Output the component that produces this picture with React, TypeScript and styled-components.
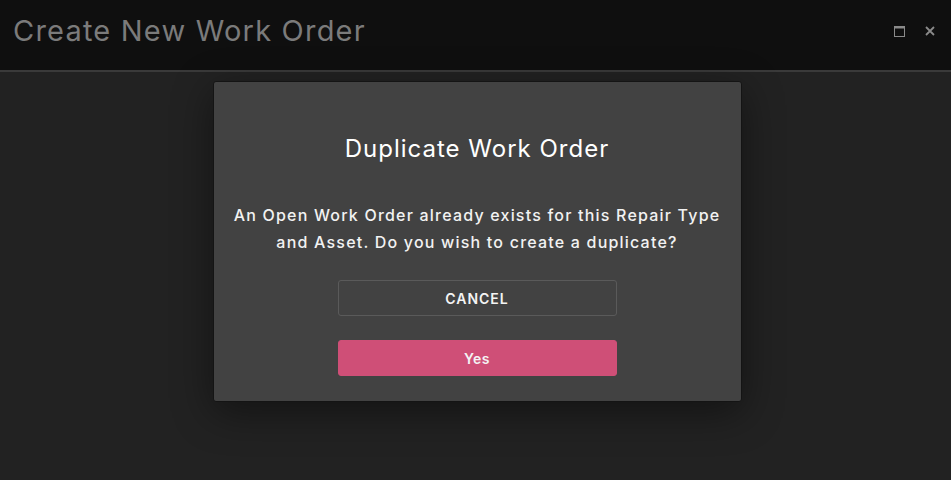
import React from "react";
import styled, { createGlobalStyle } from "styled-components";

const GlobalStyle = createGlobalStyle`
  html, body {
    margin: 0;
    padding: 0;
    background: #222222;
    font-family: "Inter", "Noto Sans", sans-serif;
  }
  #root {
    height: 480px;
  }
`;

const Page = styled.div`
  display: flex;
  flex-direction: column;
  height: 480px;
  background: #222222;
`;

const Header = styled.header`
  display: flex;
  align-items: center;
  justify-content: space-between;
  height: 72px;
  padding: 0 16px 0 13px;
  background: #0f0f0f;
  border-bottom: 2px solid #3a3a3a;
  box-sizing: border-box;
  flex-shrink: 0;
`;

const Title = styled.h1`
  margin: 0 0 10px;
  font-size: 29px;
  font-weight: 400;
  letter-spacing: 1.2px;
  color: #7b7b7b;
`;

const WindowControls = styled.div`
  display: flex;
  align-items: center;
  gap: 20px;
  margin-bottom: 8px;
`;

const ControlButton = styled.button`
  display: flex;
  padding: 0;
  border: none;
  background: transparent;
  color: #8a8a8a;
  cursor: pointer;
`;

const Body = styled.main`
  flex: 1;
  display: flex;
  justify-content: center;
  align-items: flex-start;
  padding: 9px 0 0 3px;
`;

const Dialog = styled.div`
  width: 529px;
  box-sizing: border-box;
  padding: 52px 0 25px;
  display: flex;
  flex-direction: column;
  align-items: center;
  background: #424242;
  border: 1px solid #141414;
  border-radius: 3px;
  box-shadow: 0 10px 40px rgba(0, 0, 0, 0.45);
`;

const DialogTitle = styled.h2`
  margin: 0 0 38px;
  font-size: 24px;
  font-weight: 400;
  line-height: 30px;
  letter-spacing: 1px;
  color: #ffffff;
`;

const Message = styled.p`
  margin: 0 0 24px;
  font-size: 16px;
  font-weight: 500;
  line-height: 27px;
  letter-spacing: 1.2px;
  text-align: center;
  color: #f2f2f2;
`;

const Actions = styled.div`
  display: flex;
  flex-direction: column;
  gap: 24px;
  width: 279px;
`;

const ActionButton = styled.button<{ $primary?: boolean }>`
  height: 36px;
  border-radius: 3px;
  border: 1px solid ${(p) => (p.$primary ? "#cf4f77" : "#5a5a5a")};
  background: ${(p) => (p.$primary ? "#cf4f77" : "transparent")};
  color: #f4f4f4;
  font-family: inherit;
  font-size: 14px;
  font-weight: 600;
  letter-spacing: ${(p) => (p.$primary ? "0.5px" : "1px")};
  cursor: pointer;
`;

function MaximizeIcon() {
  return (
    <svg width="11" height="11" viewBox="0 0 11 11" fill="none">
      <rect x="0.5" y="0.5" width="10" height="10" stroke="#8a8a8a" strokeWidth="1" />
      <rect x="0.5" y="0.5" width="10" height="2" fill="#8a8a8a" />
    </svg>
  );
}

function CloseIcon() {
  return (
    <svg width="10" height="10" viewBox="0 0 10 10" fill="none">
      <path d="M1 1L9 9M9 1L1 9" stroke="#8a8a8a" strokeWidth="1.8" />
    </svg>
  );
}

export default function App() {
  return (
    <>
      <GlobalStyle />
      <Page>
        <Header>
          <Title>Create New Work Order</Title>
          <WindowControls>
            <ControlButton aria-label="Maximize">
              <MaximizeIcon />
            </ControlButton>
            <ControlButton aria-label="Close">
              <CloseIcon />
            </ControlButton>
          </WindowControls>
        </Header>
        <Body>
          <Dialog>
            <DialogTitle>Duplicate Work Order</DialogTitle>
            <Message>
              An Open Work Order already exists for this Repair Type
              <br />
              and Asset. Do you wish to create a duplicate?
            </Message>
            <Actions>
              <ActionButton>CANCEL</ActionButton>
              <ActionButton $primary>Yes</ActionButton>
            </Actions>
          </Dialog>
        </Body>
      </Page>
    </>
  );
}
